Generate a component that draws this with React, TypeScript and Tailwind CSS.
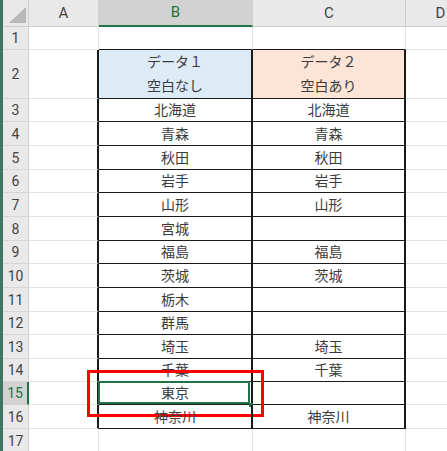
import React from 'react';

type DataRow = { n: number; h: string; b: string; c: string };

const rows: DataRow[] = [
  { n: 3, h: 'h-[23px]', b: '北海道', c: '北海道' },
  { n: 4, h: 'h-[24px]', b: '青森', c: '青森' },
  { n: 5, h: 'h-[24px]', b: '秋田', c: '秋田' },
  { n: 6, h: 'h-[23px]', b: '岩手', c: '岩手' },
  { n: 7, h: 'h-[24px]', b: '山形', c: '山形' },
  { n: 8, h: 'h-[24px]', b: '宮城', c: '' },
  { n: 9, h: 'h-[23px]', b: '福島', c: '福島' },
  { n: 10, h: 'h-[24px]', b: '茨城', c: '茨城' },
  { n: 11, h: 'h-[24px]', b: '栃木', c: '' },
  { n: 12, h: 'h-[23px]', b: '群馬', c: '' },
  { n: 13, h: 'h-[24px]', b: '埼玉', c: '埼玉' },
  { n: 14, h: 'h-[23px]', b: '千葉', c: '千葉' },
  { n: 15, h: 'h-[23px]', b: '東京', c: '' },
  { n: 16, h: 'h-[24px]', b: '神奈川', c: '神奈川' },
];

const RowHead: React.FC<{ n: number; active?: boolean }> = ({ n, active }) =>
  active ? (
    <div className="w-[26px] shrink-0 flex items-center justify-center bg-[#d2d2d2] border-r-2 border-r-[#217346] border-b border-b-[#d0d0d0] text-[#217346] text-[14px]">
      {n}
    </div>
  ) : (
    <div className="w-[26px] shrink-0 flex items-center justify-center bg-[#e9e9e9] border-r border-r-[#cfcfcf] border-b border-b-[#d6d6d6] text-[#444] text-[14px]">
      {n}
    </div>
  );

export default function App() {
  return (
    <div className="flex w-[447px] h-[451px] overflow-hidden bg-white font-['Roboto','Noto_Sans_CJK_JP',sans-serif] leading-none">
      <div className="w-[3px] shrink-0 bg-[#3e7565]" />
      <div className="flex flex-col shrink-0">
        {/* column headers */}
        <div className="flex h-[27px] shrink-0 text-[15px] text-[#444]">
          <div className="w-[26px] shrink-0 bg-[#e9e9e9] border-r border-b border-[#cfcfcf]">
            <svg width="25" height="26" viewBox="0 0 25 26">
              <polygon points="6,23 23,23 23,7" fill="#b8b8b8" />
            </svg>
          </div>
          <div className="w-[70px] shrink-0 flex items-center justify-center bg-[#e9e9e9] border-r border-b border-[#cfcfcf]">A</div>
          <div className="w-[154px] shrink-0 flex items-center justify-center bg-[#d2d2d2] border-r border-r-[#cfcfcf] border-b-2 border-b-[#217346] text-[#217346]">B</div>
          <div className="w-[153px] shrink-0 flex items-center justify-center bg-[#e9e9e9] border-r border-b border-[#cfcfcf]">C</div>
          <div className="w-[70px] shrink-0 flex items-center justify-center bg-[#e9e9e9] border-r border-b border-[#cfcfcf]">D</div>
        </div>

        {/* row 1 */}
        <div className="flex h-[23px] shrink-0">
          <RowHead n={1} />
          <div className="w-[70px] shrink-0 border-r border-b border-[#e1e1e1]" />
          <div className="w-[154px] shrink-0 border-r border-r-[#e1e1e1] border-b border-b-[#1a1a1a]" />
          <div className="w-[153px] shrink-0 border-r border-r-[#e1e1e1] border-b border-b-[#1a1a1a]" />
          <div className="w-[70px] shrink-0 border-r border-b border-[#e1e1e1]" />
        </div>

        {/* row 2 headings */}
        <div className="flex h-[49px] shrink-0 text-[14px] text-[#3b3b3b]">
          <RowHead n={2} />
          <div className="w-[70px] shrink-0 border-r-2 border-r-[#1a1a1a] border-b border-b-[#e1e1e1]" />
          <div className="w-[154px] shrink-0 flex flex-col bg-[#ddebf7] border-r-2 border-r-[#1a1a1a] border-b border-b-[#1a1a1a]">
            <div className="flex-1 flex items-center justify-center">データ１</div>
            <div className="flex-1 flex items-center justify-center">空白なし</div>
          </div>
          <div className="w-[153px] shrink-0 flex flex-col bg-[#fce4d6] border-r-2 border-r-[#1a1a1a] border-b border-b-[#1a1a1a]">
            <div className="flex-1 flex items-center justify-center">データ２</div>
            <div className="flex-1 flex items-center justify-center">空白あり</div>
          </div>
          <div className="w-[70px] shrink-0 border-r border-b border-[#e1e1e1]" />
        </div>

        {rows.map((r) => (
          <div key={r.n} className={`flex shrink-0 text-[14px] text-[#3b3b3b] ${r.h}`}>
            <RowHead n={r.n} active={r.n === 15} />
            <div className="w-[70px] shrink-0 border-r-2 border-r-[#1a1a1a] border-b border-b-[#e1e1e1]" />
            <div className="relative w-[154px] shrink-0 flex items-center justify-center border-r-2 border-r-[#1a1a1a] border-b border-b-[#1a1a1a]">
              {r.b}
              {r.n === 15 && (
                <>
                  <div className="absolute left-[-1px] top-[-1px] right-[1px] bottom-0 border-2 border-[#217346]" />
                  <div className="absolute left-[150px] top-[21px] w-[4px] h-[4px] bg-[#217346]" />
                  <div className="absolute left-[-12px] top-[-12px] w-[177px] h-[47px] border-[3px] border-[#ff0000]" />
                </>
              )}
            </div>
            <div className="w-[153px] shrink-0 flex items-center justify-center border-r-2 border-r-[#1a1a1a] border-b border-b-[#1a1a1a]">
              {r.c}
            </div>
            <div className="w-[70px] shrink-0 border-r border-b border-[#e1e1e1]" />
          </div>
        ))}

        {/* row 17 */}
        <div className="flex h-[24px] shrink-0">
          <RowHead n={17} />
          <div className="w-[70px] shrink-0 border-r border-b border-[#e1e1e1]" />
          <div className="w-[154px] shrink-0 border-r border-b border-[#e1e1e1]" />
          <div className="w-[153px] shrink-0 border-r border-b border-[#e1e1e1]" />
          <div className="w-[70px] shrink-0 border-r border-b border-[#e1e1e1]" />
        </div>
      </div>
    </div>
  );
}
